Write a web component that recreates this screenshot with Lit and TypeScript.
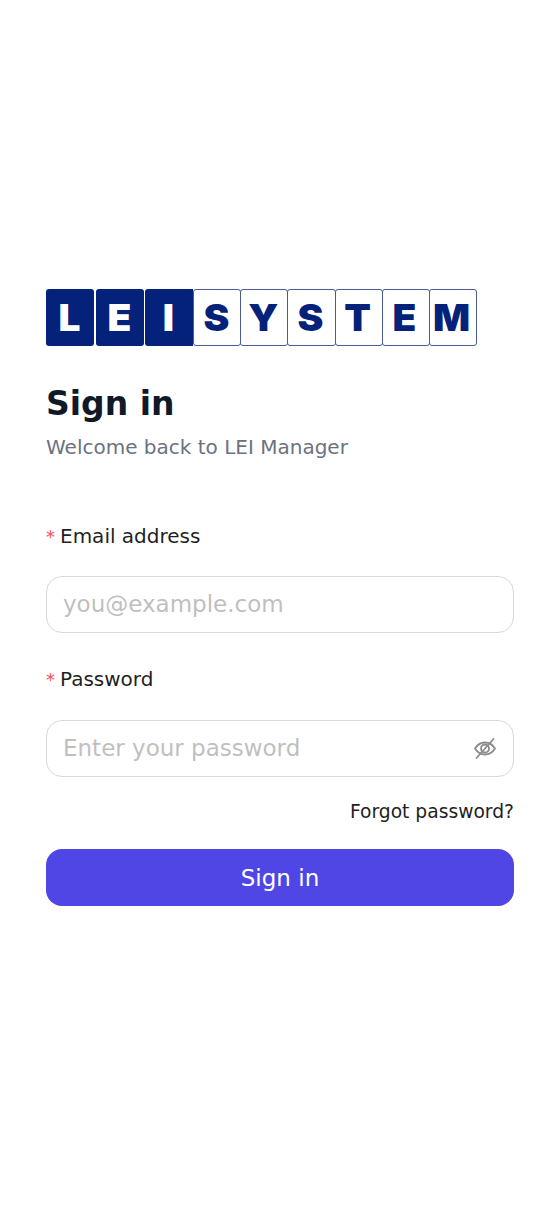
import { LitElement, html, css } from "lit";
import { customElement } from "lit/decorators.js";

@customElement("app-root")
export class AppRoot extends LitElement {
  static styles = css`
    :host { display: block; background: #fff; font-family: "DejaVu Sans", sans-serif; color: #1f1f1f; min-height: 1212px; }
    .page { padding: 289px 46px 0; display: flex; flex-direction: column; }
    .logo { display: flex; width: 431px; height: 57px; margin-bottom: 37px; }
    .tile { flex: 1 1 0; min-width: 0; box-sizing: border-box; display: flex; align-items: center; justify-content: center;
      font-family: "Inter", "Liberation Sans", sans-serif; font-weight: 900; font-size: 37px; line-height: 1;
      color: #04227a; border: 1.2px solid #4a5c96; border-radius: 3px; margin-left: -1px; background: #fff; padding-right: 2px; }
    .tile span { display: block; transform: scaleX(1.05); }
    .tile.dark { flex: 0 0 48px; background: #04227a; color: #fff; border: 0; margin-left: 0; margin-right: 1.5px; padding-right: 1px; }
    .tile.dark.last { margin-right: 1px; border-radius: 3px 0 0 3px; }
    h1 { margin: 0; font-size: 33px; line-height: 42px; font-weight: 700; color: #111827; }
    .sub { margin: 7px 0 0; font-size: 20px; line-height: 30px; color: #6b7280; }
    .label { font-size: 20px; line-height: 30px; color: #1f1f1f; display: flex; gap: 5px; align-items: baseline; }
    .req { color: #ff4d4f; font-size: 18px; }
    .first { margin-top: 59px; }
    .second { margin-top: 31px; }
    .box { margin-top: 24px; height: 57px; box-sizing: border-box; border: 1.5px solid #d9d9d9; border-radius: 16px;
      display: flex; align-items: center; padding: 0 16px; background: #fff; }
    .box.pw { margin-top: 25px; }
    input { flex: 1; min-width: 0; border: 0; outline: 0; padding: 0 0 2px; background: transparent; font: inherit; font-size: 23px; color: #1f1f1f; }
    input::placeholder { color: #bfbfbf; opacity: 1; }
    .eye { width: 24px; height: 24px; flex: none; color: #8c8c8c; display: block; }
    .forgot { align-self: flex-end; margin-top: 20px; font-size: 18.7px; line-height: 30px; color: #1f1f1f; text-decoration: none; }
    button { margin-top: 22px; height: 57px; border: 0; border-radius: 16px; background: #4f46e5; color: #fff;
      font: inherit; font-size: 23px; cursor: pointer; }
  `;

  render() {
    const dark = ["L", "E", "I"];
    const light = ["S", "Y", "S", "T", "E", "M"];
    return html`<div class="page">
      <div class="logo">
        ${dark.map((c, i) => html`<div class="tile dark ${i === 2 ? "last" : ""}"><span>${c}</span></div>`)}
        ${light.map((c) => html`<div class="tile"><span>${c}</span></div>`)}
      </div>
      <h1>Sign in</h1>
      <p class="sub">Welcome back to LEI Manager</p>
      <div class="label first"><span class="req">*</span><span>Email address</span></div>
      <div class="box"><input type="email" placeholder="you@example.com" /></div>
      <div class="label second"><span class="req">*</span><span>Password</span></div>
      <div class="box pw">
        <input type="password" placeholder="Enter your password" />
        <svg class="eye" viewBox="0 0 24 24" fill="none" stroke="currentColor" stroke-width="1.8" stroke-linecap="round" stroke-linejoin="round">
          <path d="M2 11.500C4.500 7.500 8 5.500 12 5.500s7.500 2 10 6c-2.500 4-6 6-10 6s-7.500-2-10-6z" />
          <circle cx="12" cy="11.500" r="4" />
          <path d="M20.500 2 3.500 21" />
        </svg>
      </div>
      <a class="forgot" href="#">Forgot password?</a>
      <button type="button">Sign in</button>
    </div>`;
  }
}
